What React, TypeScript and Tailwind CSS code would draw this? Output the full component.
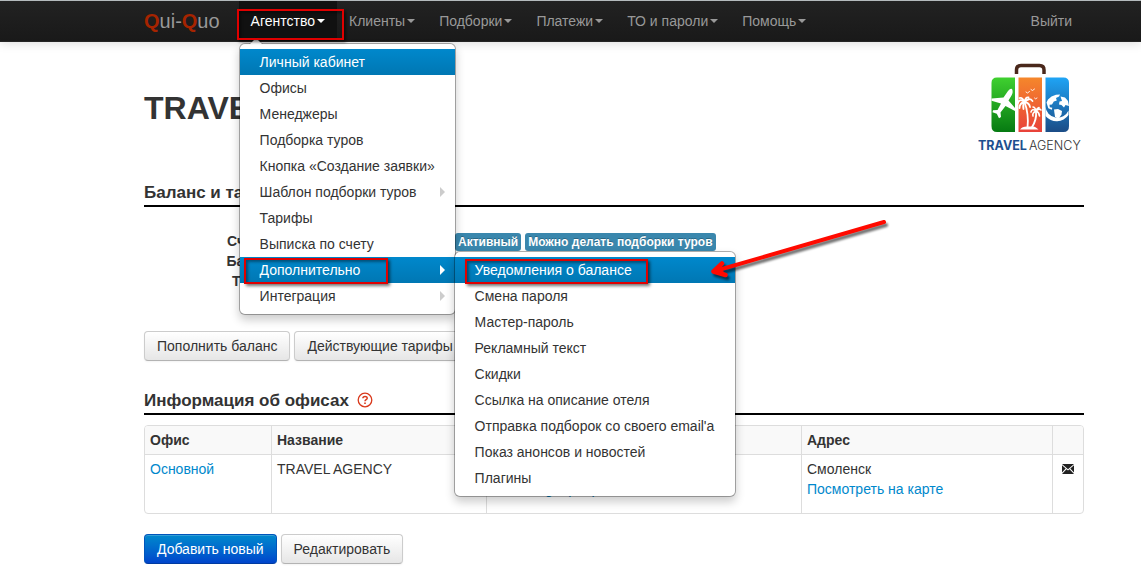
import type { ReactNode } from "react";

type Item = { label: string; sub?: boolean; active?: boolean };

const agencyMenu: Item[] = [
  { label: "Личный кабинет", active: true },
  { label: "Офисы" },
  { label: "Менеджеры" },
  { label: "Подборка туров" },
  { label: "Кнопка «Создание заявки»" },
  { label: "Шаблон подборки туров", sub: true },
  { label: "Тарифы" },
  { label: "Выписка по счету" },
  { label: "Дополнительно", sub: true, active: true },
  { label: "Интеграция", sub: true },
];

const extraMenu: Item[] = [
  { label: "Уведомления о балансе", active: true },
  { label: "Смена пароля" },
  { label: "Мастер-пароль" },
  { label: "Рекламный текст" },
  { label: "Скидки" },
  { label: "Ссылка на описание отеля" },
  { label: "Отправка подборок со своего email'а" },
  { label: "Показ анонсов и новостей" },
  { label: "Плагины" },
];

const navItems = ["Клиенты", "Подборки", "Платежи", "ТО и пароли", "Помощь"];

function Caret() {
  return <span className="border-x-4 border-t-4 border-x-transparent border-t-current" />;
}

function Highlight({ className }: { className: string }) {
  return (
    <span
      aria-hidden="true"
      className={`pointer-events-none absolute z-20 border-2 border-[#e00000] shadow-[2px_2px_3px_rgba(0,0,0,0.55),inset_2px_2px_3px_rgba(0,0,0,0.4)] ${className}`}
    />
  );
}

function MenuPanel({ className, children }: { className: string; children: ReactNode }) {
  return (
    <ul
      className={`absolute rounded-md border border-black/30 bg-white bg-clip-padding py-[5px] shadow-[0_5px_10px_rgba(0,0,0,0.2)] ${className}`}
    >
      {children}
    </ul>
  );
}

function MenuLink({ item }: { item: Item }) {
  return (
    <a
      href="#"
      className={`flex h-[26px] items-center justify-between pr-[10px] pl-5 whitespace-nowrap ${
        item.active ? "bg-linear-to-b from-[#0088cc] to-[#0077b3] text-white" : "text-[#333333]"
      }`}
    >
      <span className="leading-5">{item.label}</span>
      {item.sub && (
        <span
          className={`border-y-[5px] border-l-[5px] border-y-transparent ${
            item.active ? "border-l-white" : "border-l-[#cccccc]"
          }`}
        />
      )}
    </a>
  );
}

function Arrow() {
  return (
    <svg
      aria-hidden="true"
      width="190"
      height="70"
      viewBox="0 0 190 70"
      fill="none"
      stroke="#ff0a00"
      strokeLinecap="round"
      strokeLinejoin="round"
      className="pointer-events-none absolute -top-[42px] left-[250px] z-20 drop-shadow-[2px_3px_1px_rgba(0,0,0,0.55)]"
    >
      <path d="M179 7L10 56" strokeWidth="4" />
      <path d="M17 48.500L8.500 56.500 20.500 60" strokeWidth="4.500" />
      <path d="M8.500 56.500L17 50l-1 4 4 5z" fill="#ff0a00" strokeWidth="1" />
    </svg>
  );
}

function AgencyMenu() {
  return (
    <MenuPanel className="top-[42px] left-0 z-10 w-[217px]">
      <li
        aria-hidden="true"
        className="absolute -top-[7px] left-[9px] border-x-[7px] border-b-[7px] border-x-transparent border-b-black/20"
      />
      <li
        aria-hidden="true"
        className="absolute -top-[6px] left-[10px] border-x-[6px] border-b-[6px] border-x-transparent border-b-white"
      />
      {agencyMenu.map((item) => (
        <li key={item.label} className="relative">
          <MenuLink item={item} />
          {item.label === "Дополнительно" && (
            <>
              <Highlight className="top-px left-1 h-[26px] w-36" />
              <MenuPanel className="-top-[6px] -right-[281px] w-[282px]">
                {extraMenu.map((extra, index) => (
                  <li key={extra.label} className="relative">
                    <MenuLink item={extra} />
                    {index === 0 && (
                      <>
                        <Highlight className="top-0.5 left-[10px] h-[25px] w-[183px]" />
                        <Arrow />
                      </>
                    )}
                  </li>
                ))}
              </MenuPanel>
            </>
          )}
        </li>
      ))}
    </MenuPanel>
  );
}

function Navbar() {
  return (
    <header className="border-t border-b border-t-[#b4babd] border-b-[#252525] bg-linear-to-b from-[#222222] to-[#191919] pr-[57px] pl-36 shadow-[0_1px_10px_rgba(0,0,0,0.15)]">
      <nav className="flex h-10 items-stretch text-[#999999]">
        <a href="#" className="mr-[19px] flex items-center text-xl">
          <span>
            <b className="text-[#a62400]">Q</b>ui-<b className="text-[#a62400]">Q</b>uo
          </span>
        </a>
        <div className="relative">
          <button
            type="button"
            aria-expanded="true"
            className="flex h-full items-center gap-0.5 bg-[#111111] px-3 text-white"
          >
            Агентство
            <Caret />
          </button>
          <Highlight className="top-2 -left-0.5 h-[31px] w-[107px]" />
          <AgencyMenu />
        </div>
        {navItems.map((label) => (
          <button key={label} type="button" className="flex items-center gap-0.5 px-3 whitespace-nowrap">
            {label}
            <Caret />
          </button>
        ))}
        <a href="#" className="ml-auto flex items-center px-3">
          Выйти
        </a>
      </nav>
    </header>
  );
}

function Logo() {
  return (
    <svg width="106" height="91" viewBox="0 0 106 91" role="img" aria-label="Travel Agency" className="shrink-0">
      <defs>
        <linearGradient id="green" x1="0" y1="0" x2="0" y2="1">
          <stop offset="0" stopColor="#3fd02f" />
          <stop offset="1" stopColor="#067a12" />
        </linearGradient>
        <linearGradient id="orange" x1="0" y1="0" x2="0" y2="1">
          <stop offset="0" stopColor="#f5872b" />
          <stop offset="1" stopColor="#e8413a" />
        </linearGradient>
        <linearGradient id="blue" x1="0" y1="0" x2="0" y2="1">
          <stop offset="0" stopColor="#1fa4f5" />
          <stop offset="1" stopColor="#1b4c86" />
        </linearGradient>
      </defs>
      <path d="M38.500 12V8q0-4.500 4.500-4.500h18.500q4.500 0 4.500 4.500v4" fill="none" stroke="#4a281b" strokeWidth="3.500" />
      <path d="M37 15.500H19q-5.500 0-5.500 5.500v43q0 6 5.500 6h18z" fill="url(#green)" />
      <path d="M40.500 15.500H64V70H40.500z" fill="url(#orange)" />
      <path d="M67.500 15.500H85.500q5.500 0 5.500 5.500v43q0 6-5.500 6h-18z" fill="url(#blue)" />
      <path
        d="M34 27q1.500 3-.5 6.500L30.500 38.500 37 46v3L27.500 44 22.500 50.500 23 55l-2 1.300-2.200-4.500L14.500 50.300l.5-2 4.500-.3L23 41.500 13.500 38.800v-2.300L25.500 35.500 30 29q2.500-3 4-2z"
        fill="#fff"
      />
      <g fill="none" stroke="#fff" strokeLinecap="round">
        <path d="M46.500 40q4.500 12 3 26M58 49q1 9-4.500 17" strokeWidth="1.800" />
        <path
          d="M46.500 40q-5-4-6.500 1M46.500 40q-5 1-5 6M46.500 40q-2 3-1 7M46.500 40q5-5 8-1M46.500 40q5 1 5.500 5M46.500 40q-2-5-5-4M46.500 40q1-5 4-4.500"
          strokeWidth="1.800"
        />
        <path d="M58 49q-4-3-5 1M58 49q-4 2-3 5M58 49q3-3 5-1M58 49q3 1 3.500 5M58 49q-1-4-3-4M58 49q1-3 3-3.500" strokeWidth="1.600" />
        <path d="M48 30l1.500 1 2-1.500M53 27.500l1.500 1 2-1.500M56.500 36l1 .8 1.500-.8" strokeWidth="0.900" />
      </g>
      <path d="M42 67.500q2-3 7-3t6.500 0 5 3z" fill="#fff" />
      <path
        d="M67.500 44.500A12 12 0 0 0 90.500 48.500V53A14.500 14.500 0 0 1 67.500 54z"
        fill="#fff"
      />
      <path d="M68.500 40.500l1.500-3 3.500-3 4.500-1.700 4-.2-1 2-3 1.500.8 2.500-3 1-1.800 3-2.500.2.300 2.500 2.500.5-.5 2-3.500-1.500z" fill="#fff" />
      <path d="M82.500 34.500l4.500 1 3 3.500 1 5-3.500-1-1.500 2.500-2.500-2.500-2.500-.5.500-3 2.500-.5z" fill="#fff" />
      <path d="M76 47.500l4-.5 4 2-.5 3.500-3 4.500-3.500-2z" fill="#fff" />
      <text x="0" y="88" fontFamily="Inter, sans-serif" fontSize="12.500" fontWeight="700" fill="#1d4f8f">
        TRAVEL
      </text>
      <text x="51" y="88" fontFamily="Inter, sans-serif" fontSize="12.500" fontWeight="300" fill="#333">
        AGENCY
      </text>
    </svg>
  );
}

function SectionTitle({ children }: { children: ReactNode }) {
  return (
    <h2 className="mt-7 flex h-[26px] items-center gap-2 border-b-2 border-black text-[17px] font-bold">{children}</h2>
  );
}

function Button({ children, primary = false }: { children: ReactNode; primary?: boolean }) {
  return (
    <button
      type="button"
      className={`h-[30px] rounded border px-3 leading-5 whitespace-nowrap ${
        primary
          ? "border-[#0055bb] border-b-[#003ba0] bg-linear-to-b from-[#0088cc] to-[#0044cc] text-white shadow-[inset_0_1px_0_rgba(255,255,255,0.2)]"
          : "border-[#cccccc] border-b-[#b3b3b3] bg-linear-to-b from-white to-[#e6e6e6] text-[#333333] shadow-[0_1px_2px_rgba(0,0,0,0.05)]"
      }`}
    >
      {children}
    </button>
  );
}

function Badge({ children }: { children: ReactNode }) {
  return (
    <span className="flex h-[18px] items-center rounded-[3px] bg-[#3a87ad] px-[3px] text-xs font-bold whitespace-nowrap text-white [text-shadow:0_-1px_0_rgba(0,0,0,0.25)]">
      {children}
    </span>
  );
}

function HelpIcon() {
  return (
    <svg
      width="16"
      height="16"
      viewBox="0 0 16 16"
      fill="none"
      stroke="#d9391c"
      role="img"
      aria-label="Справка"
      className="mb-0.5"
    >
      <circle cx="8" cy="8" r="6.800" strokeWidth="1.300" />
      <path d="M5.900 6.300c0-2.500 4.300-2.500 4.300-.1 0 1.500-2.100 1.500-2.200 3.100" strokeWidth="1.500" />
      <path d="M7.200 11.200h1.600" strokeWidth="1.500" />
    </svg>
  );
}

function MailIcon() {
  return (
    <svg width="12" height="10" viewBox="0 0 12 10" fill="#222" role="img" aria-label="Написать">
      <path d="M0 0h12L6 5.200zM0 1.300l3.700 3.300L0 8.600zM12 1.300L8.300 4.600 12 8.600zM4.500 5.300L6 6.600l1.500-1.300L12 10H0z" />
    </svg>
  );
}

function Offices() {
  const head = "h-7 border-l border-[#dddddd] px-[5px] text-left font-bold first:border-l-0";
  const cell = "border-t border-l border-[#dddddd] px-[5px] pt-1 pb-[14px] first:border-l-0";
  return (
    <div className="mt-[10px] overflow-hidden rounded border border-[#dddddd]">
      <table className="w-full table-fixed border-separate border-spacing-0">
        <colgroup>
          <col className="w-[126px]" />
          <col className="w-[215px]" />
          <col />
          <col className="w-[251px]" />
          <col className="w-[31px]" />
        </colgroup>
        <thead className="bg-[#f9f9f9]">
          <tr>
            <th className={head}>Офис</th>
            <th className={head}>Название</th>
            <th className={head}>Контакты</th>
            <th className={head}>Адрес</th>
            <th className={head} aria-label="Почта" />
          </tr>
        </thead>
        <tbody className="align-top">
          <tr>
            <td className={cell}>
              <a href="#" className="text-[#0088cc]">Основной</a>
            </td>
            <td className={cell}>TRAVEL AGENCY</td>
            <td className={cell}>
              Телефон
              <br />
              <a href="#" className="text-[#0088cc]">www.magnepnap.ru</a>
            </td>
            <td className={cell}>
              Смоленск
              <br />
              <a href="#" className="text-[#0088cc]">Посмотреть на карте</a>
            </td>
            <td className={cell}>
              <a href="#" className="flex h-5 items-center justify-center">
                <MailIcon />
              </a>
            </td>
          </tr>
        </tbody>
      </table>
    </div>
  );
}

export default function App() {
  return (
    <div className="min-h-screen bg-white font-['Liberation_Sans',Arial,sans-serif] text-sm leading-5 text-[#333333]">
      <Navbar />
      <main className="pt-5 pr-[57px] pb-3 pl-36">
        <div className="flex items-center justify-between">
          <h1 className="text-[32px] leading-10 font-bold">TRAVEL AGENCY</h1>
          <Logo />
        </div>
        <SectionTitle>Баланс и тарифы</SectionTitle>
        <dl className="mt-6 grid grid-cols-[175px_1fr] gap-x-5">
          <dt className="text-right font-bold">Счет клиента</dt>
          <dd className="flex items-center gap-1 pt-0.5 pl-[116px]">
            <Badge>Активный</Badge>
            <Badge>Можно делать подборки туров</Badge>
          </dd>
          <dt className="text-right font-bold">Баланс счета</dt>
          <dd>0 руб.</dd>
          <dt className="text-right font-bold">Тариф счета</dt>
          <dd>Базовый</dd>
        </dl>
        <div className="mt-10 flex gap-1">
          <Button>Пополнить баланс</Button>
          <Button>Действующие тарифы</Button>
        </div>
        <SectionTitle>
          Информация об офисах
          <HelpIcon />
        </SectionTitle>
        <Offices />
        <div className="mt-5 flex gap-1">
          <Button primary>Добавить новый</Button>
          <Button>Редактировать</Button>
        </div>
      </main>
    </div>
  );
}
